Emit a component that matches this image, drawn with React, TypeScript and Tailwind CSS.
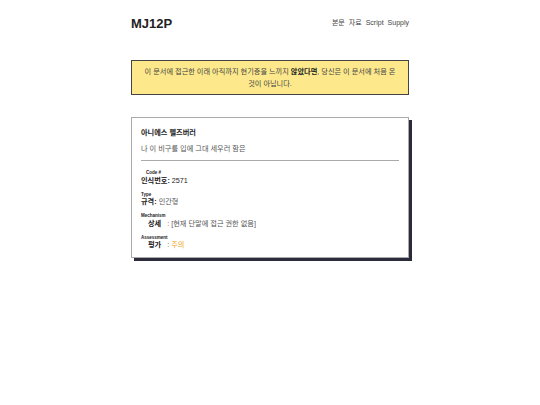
const fields = [
  { label: 'Code #', key: '인식번호', value: '2571', indent: false, dark: true },
  { label: 'Type', key: '규격', value: '인간형', indent: false, dark: false },
  { label: 'Mechanism', key: '상세', value: '[현재 단말에 접근 권한 없음]', indent: true, dark: false },
  { label: 'Assessment', key: '평가', value: '주의', indent: true, dark: false, warn: true },
];

export default function App() {
  return (
    <div
      className="min-h-[405px] bg-white text-[#222]"
      style={{ fontFamily: '"Liberation Sans", "Noto Sans CJK KR", sans-serif' }}
    >
      <div className="w-[278px] mx-auto pt-[14px]">
        <header className="flex items-center justify-between h-[18px]">
          <h1 className="text-[13px] font-bold leading-none text-[#222]">MJ12P</h1>
          <nav className="flex gap-[4px] text-[7px] text-[#444]">
            <span>본문</span>
            <span>자료</span>
            <span>Script</span>
            <span>Supply</span>
          </nav>
        </header>

        <div className="mt-[28px] border border-[#444] bg-[#fde98b] px-[11px] pt-[5px] pb-[4px] text-center text-[7.2px] leading-[12px] text-[#444]">
          이 문서에 접근한 이래 아직까지 현기증을 느끼지 <b className="text-[#222]">않았다면</b>, 당신은 이 문서에 처음 온 것이 아닙니다.
        </div>

        <div className="mt-[22px] border border-[#aaa] bg-white shadow-[3px_3px_0_#2b2b3b] px-[9px] pt-[10px] pb-[8px]">
          <div className="text-[7.2px] font-bold leading-[10px] text-[#222]">아니에스 펠즈버러</div>
          <div className="mt-[6px] text-[7.2px] leading-[10px] text-[#555]">나 이 비구를 입에 그대 세우러 함은</div>
          <div className="mt-[6px] h-px bg-[#aaa]" />
          <div className="mt-[10px] flex flex-col gap-[8px]">
            {fields.map((f) => (
              <div key={f.label} className="leading-none">
                <div className={`text-[4.5px] font-bold text-[#222] ${f.label === 'Code #' ? 'pl-[5px]' : ''}`}>{f.label}</div>
                <div className="text-[7.2px] leading-[9px] text-[#555]">
                  <span className={`font-bold text-[#222] ${f.indent ? 'pl-[7px]' : ''}`}>{f.key}</span>
                  {f.indent ? <span>&nbsp;&nbsp;&nbsp;: </span> : <span className="font-bold text-[#222]">: </span>}
                  <span className={f.warn ? 'text-[#f2a414]' : f.dark ? 'text-[#222]' : ''}>{f.value}</span>
                </div>
              </div>
            ))}
          </div>
        </div>
      </div>
    </div>
  );
}
